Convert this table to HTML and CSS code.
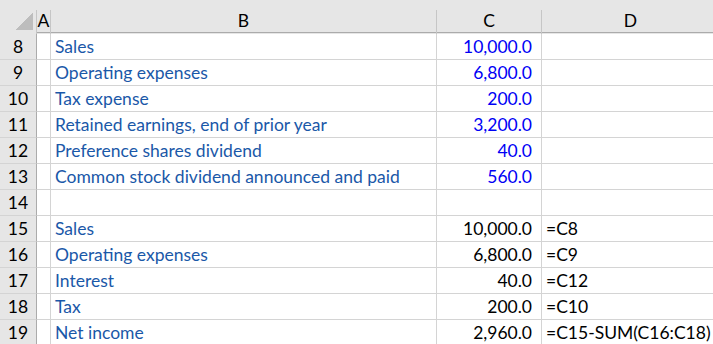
FILE: index.html
```html
<!DOCTYPE html>
<html lang="en">
<head>
    <meta charset="UTF-8">
    <meta name="viewport" content="width=device-width, initial-scale=1.0">
    <title>Net income worksheet</title>
    <link rel="stylesheet" href="styles.css">
</head>
<body>
    <table class="sheet">
        <colgroup>
            <col class="col-rows">
            <col class="col-a">
            <col class="col-b">
            <col class="col-c">
            <col class="col-d">
        </colgroup>
        <thead>
            <tr>
                <th class="corner"><span class="corner-mark"></span></th>
                <th class="col-head">A</th>
                <th class="col-head">B</th>
                <th class="col-head">C</th>
                <th class="col-head">D</th>
            </tr>
        </thead>
        <tbody>
            <!-- inputs -->
            <tr><th class="row-head">8</th><td></td><td class="label">Sales</td><td class="num input">10,000.0</td><td></td></tr>
            <tr><th class="row-head">9</th><td></td><td class="label">Operating expenses</td><td class="num input">6,800.0</td><td></td></tr>
            <tr><th class="row-head">10</th><td></td><td class="label">Tax expense</td><td class="num input">200.0</td><td></td></tr>
            <tr><th class="row-head">11</th><td></td><td class="label">Retained earnings, end of prior year</td><td class="num input">3,200.0</td><td></td></tr>
            <tr><th class="row-head">12</th><td></td><td class="label">Preference shares dividend</td><td class="num input">40.0</td><td></td></tr>
            <tr><th class="row-head">13</th><td></td><td class="label">Common stock dividend announced and paid</td><td class="num input">560.0</td><td></td></tr>
            <tr><th class="row-head">14</th><td></td><td></td><td></td><td></td></tr>
            <!-- calculation -->
            <tr><th class="row-head">15</th><td></td><td class="label">Sales</td><td class="num">10,000.0</td><td class="formula">=C8</td></tr>
            <tr><th class="row-head">16</th><td></td><td class="label">Operating expenses</td><td class="num">6,800.0</td><td class="formula">=C9</td></tr>
            <tr><th class="row-head">17</th><td></td><td class="label">Interest</td><td class="num">40.0</td><td class="formula">=C12</td></tr>
            <tr><th class="row-head">18</th><td></td><td class="label">Tax</td><td class="num">200.0</td><td class="formula">=C10</td></tr>
            <tr><th class="row-head">19</th><td></td><td class="label">Net income</td><td class="num">2,960.0</td><td class="formula">=C15-SUM(C16:C18)</td></tr>
        </tbody>
    </table>
</body>
</html>
```

FILE: styles.css
```css
* {
    margin: 0;
    padding: 0;
    box-sizing: border-box;
}

body {
    font-family: Lato, "Open Sans", sans-serif;
    font-size: 17.5px;
    color: #000;
    background: #fff;
    overflow: hidden;
}

.sheet {
    border-collapse: separate;
    border-spacing: 0;
    table-layout: fixed;
    width: 720px;
}

.col-rows { width: 37px; }
.col-a { width: 14px; }
.col-b { width: 386px; }
.col-c { width: 105px; }
.col-d { width: 178px; }

th, td {
    height: 26px;
    padding: 2px 0 1px 0;
    line-height: 22px;
    vertical-align: bottom;
    white-space: nowrap;
    overflow: hidden;
    font-weight: normal;
    border-right: 1px solid #d4d4d4;
    border-bottom: 1px solid #d4d4d4;
}

thead th {
    height: 34px;
    padding: 0 0 1px 0;
    background: #e6e6e6;
    border-bottom: 1px solid #ababab;
    border-right: 1px solid;
    border-image: linear-gradient(to bottom, transparent 10px, #c6c6c6 10px) 1;
    border-image-width: 0 1px 0 0;
}

.corner {
    text-align: right;
    padding: 0 3px 3px 0;
    line-height: 0;
}

.corner-mark {
    display: inline-block;
    width: 17px;
    height: 17px;
    background: linear-gradient(to bottom right, transparent 50%, #bdbdbd 50%);
}

.col-head {
    text-align: center;
    box-shadow: inset 0 -1px 0 #ababab;
}

.row-head {
    background: #e6e6e6;
    text-align: center;
    border-right: 1px solid #ababab;
    border-bottom: 1px solid #d4d4d4;
}

.label {
    padding-left: 4px;
    color: #1a58a8;
}

.num {
    text-align: right;
    padding-right: 9px;
}

.num.input {
    color: #0000f5;
}

.formula {
    padding-left: 4px;
}
```
